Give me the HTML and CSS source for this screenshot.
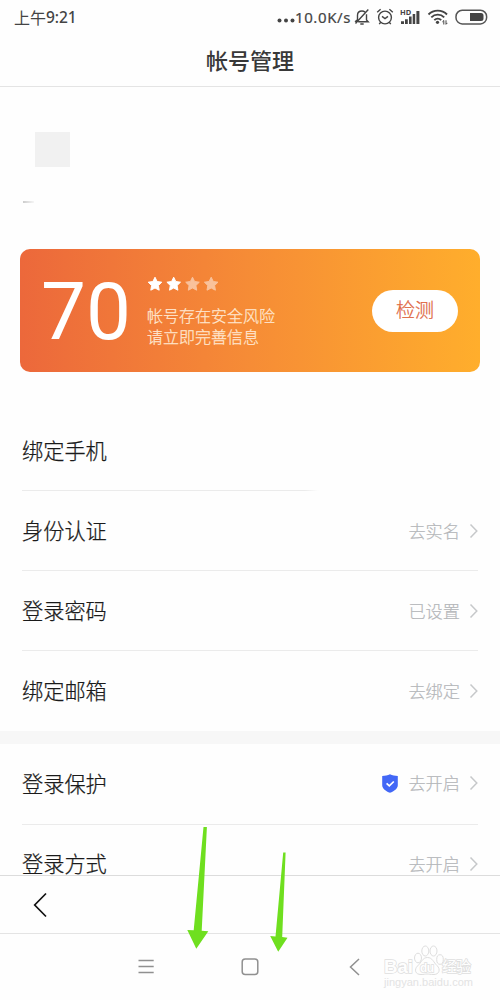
FILE: index.html
```
<!DOCTYPE html>
<html lang="zh-CN">
<head>
<meta charset="utf-8">
<title>帐号管理</title>
<link rel="stylesheet" href="styles.css">
</head>
<body>
<div class="screen">
  <header class="status">
    <div class="clock">上午<span class="time">9:21</span></div>
    <div class="indicators">
      <svg class="dots" width="18" height="20" viewBox="0 0 18 20"><circle cx="2.5" cy="13.5" r="2"/><circle cx="9" cy="13.5" r="2"/><circle cx="15.5" cy="13.5" r="2"/></svg>
      <span class="speed">10.0K/s</span>
      <svg class="line bell" width="16" height="18" viewBox="0 0 16 18"><path d="M3.5 12V7.300C3.500 4.800 5.300 3 8 3c1.200 0 2.200.4 3 1M12.500 6.300V12l1.700 1.800H4.200M1.500 15.500 14.300 1.500M1 13.800l2.500-2M6.300 16h3.400"/></svg>
      <svg class="line alarm" width="18" height="18" viewBox="0 0 18 18"><circle cx="9" cy="9.500" r="6.400"/><path d="M1.200 4.200 4.600 1.300M16.800 4.200 13.400 1.300M6 8.400l3 2.200 3-2.200M4.800 14.200l-1.600 1.900M13.200 14.200l1.600 1.900"/></svg>
      <svg class="signal" width="21" height="18" viewBox="0 0 21 18"><text x="0" y="7.300">HD</text><path d="M1 13.200h3V16H1zM5 11.200h2.800V16H5zM9 8.500h2.600V16H9zM12.700 6h2.500v10h-2.500zM16.400 3h3v13h-3z"/></svg>
      <svg class="wifi" width="21" height="18" viewBox="0 0 21 18"><path class="arc" d="M1.500 6.500C6.500 1.300 15 1.300 20 6.500M4.300 9.400c3.600-3.700 9.300-3.700 12.900 0M7.300 12.100c2-2 4.900-2 6.900 0"/><circle cx="10.500" cy="14.300" r="1.600"/><path class="tiny" d="M16.800 16.500v-4l-1.400 1.400M19 12.300v4l1.400-1.400"/></svg>
      <svg class="battery" width="33" height="18" viewBox="0 0 33 18"><rect class="shell" x="1" y="2.300" width="30.600" height="13.600" rx="6.200"/><path d="M15 5h11a2.500 2.500 0 0 1 2.500 2.500v3A2.500 2.500 0 0 1 26 13H15z"/></svg>
    </div>
  </header>
  <h1 class="title">帐号管理</h1>

  <main class="content">
    <section class="profile">
      <div class="avatar"></div>
      <div class="trace"></div>
    </section>

    <section class="card">
      <div class="score">70</div>
      <div class="summary">
        <svg class="stars" width="74" height="16" viewBox="0 0 74 16">
          <defs><path id="star" d="M8 1.200l2.100 4.300 4.700.7-3.400 3.300.8 4.700L8 12l-4.200 2.200.8-4.700L1.200 6.200l4.700-.7z"/></defs>
          <use href="#star"/><use href="#star" x="18.700"/><use href="#star" x="37.500" class="off"/><use href="#star" x="56.200" class="off"/>
        </svg>
        <p>帐号存在安全风险</p>
        <p>请立即完善信息</p>
      </div>
      <button class="check">检测</button>
    </section>

    <ul class="list">
      <li class="row faded"><span class="label">绑定手机</span></li>
      <li class="row"><span class="label">身份认证</span><span class="value">去实名</span><svg class="chevron" width="9" height="16" viewBox="0 0 9 16"><path d="M1.500 1.500 7.800 8l-6.300 6.500"/></svg></li>
      <li class="row"><span class="label">登录密码</span><span class="value">已设置</span><svg class="chevron" width="9" height="16" viewBox="0 0 9 16"><path d="M1.500 1.500 7.800 8l-6.300 6.500"/></svg></li>
      <li class="row last"><span class="label">绑定邮箱</span><span class="value">去绑定</span><svg class="chevron" width="9" height="16" viewBox="0 0 9 16"><path d="M1.500 1.500 7.800 8l-6.300 6.500"/></svg></li>
    </ul>
    <div class="band"></div>
    <ul class="list second">
      <li class="row"><span class="label">登录保护</span><svg class="shield" width="16" height="19" viewBox="0 0 16 19"><path class="body" d="M8 .3C10.300 1.500 13 2 15.800 2v9.200c0 3.200-3.700 6-7.800 7.600-4.100-1.600-7.800-4.400-7.800-7.600V2C3 2 5.700 1.500 8 .3z"/><path class="tick" d="M4.600 9.300l2.700 2.600 4.500-4.400"/></svg><span class="value">去开启</span><svg class="chevron" width="9" height="16" viewBox="0 0 9 16"><path d="M1.500 1.500 7.800 8l-6.300 6.500"/></svg></li>
      <li class="row last"><span class="label">登录方式</span><span class="value">去开启</span><svg class="chevron" width="9" height="16" viewBox="0 0 9 16"><path d="M1.500 1.500 7.800 8l-6.300 6.500"/></svg></li>
    </ul>
  </main>

  <div class="toolbar">
    <svg class="back" width="16" height="26" viewBox="0 0 16 26"><path d="M13 1.500 1.700 13 13 24.500"/></svg>
  </div>
  <nav class="nav">
    <svg width="18" height="18" viewBox="0 0 18 18"><path d="M2.500 2.500h15.200M2.500 8.500h15.200M2.500 14.500h15.200"/></svg>
    <svg width="18" height="18" viewBox="0 0 18 18"><rect x="1.200" y="1" width="15.600" height="15.600" rx="3"/></svg>
    <svg width="18" height="18" viewBox="0 0 18 18"><path d="M14 1 5.500 9l8.500 8"/></svg>
  </nav>

  <svg class="arrows" width="130" height="130" viewBox="185 825 130 130">
    <path d="M203.500 827h3.400l-5.200 103.800 6.600.4-12 17.600-9-18.800 6.400.3z"/>
    <path d="M283.200 852.500h2.400l-3.400 84.400 5.300.9-9.300 14-8-15.900 5.300.5z"/>
  </svg>
  <svg class="watermark" width="100" height="50" viewBox="380 940 100 50">
    <g class="paw"><ellipse cx="418" cy="958" rx="3.500" ry="4.800"/><ellipse cx="425.300" cy="951" rx="3.500" ry="5"/><ellipse cx="433.500" cy="951" rx="3.500" ry="5"/><ellipse cx="440" cy="959.500" rx="3.300" ry="4.800"/><path d="M427.500 957.500c5 0 6 5 9.500 8 4 4 2 9-3 9-4 0-5-.5-7-.5s-3 .5-6 .5c-6 0-7-5-3.500-8.500 4-3.500 5-8.500 10-8.500z"/></g>
    <text class="brand" x="384" y="973" textLength="29" lengthAdjust="spacingAndGlyphs">Bai</text>
    <text class="du" x="420" y="972" textLength="14">du</text>
    <text class="cn" x="442" y="972" textLength="29">经验</text>
    <text class="url" x="384" y="985.500" textLength="89">jingyan.baidu.com</text>
  </svg>
</div>
</body>
</html>
```
FILE: styles.css
```
* { box-sizing: border-box; }
body {
  margin: 0;
  background: #fefefe;
  font-family: "Noto Sans CJK SC", sans-serif;
  color: #222;
}
.screen {
  position: relative;
  width: 500px;
  height: 1000px;
  overflow: hidden;
  display: flex;
  flex-direction: column;
}
svg { flex: none; display: block; }

.status {
  height: 34px;
  flex: none;
  padding: 0 12px 0 14px;
  display: flex;
  justify-content: space-between;
  align-items: center;
  color: #444;
}
.clock { font-size: 16px; line-height: 34px; display: flex; }
.time { font-family: "Noto Sans", sans-serif; font-size: 15.500px; font-weight: 500; letter-spacing: -0.100px; }
.indicators { display: flex; align-items: center; fill: #444; }
.speed { font-family: "Noto Sans", sans-serif; font-size: 15px; line-height: 20px; letter-spacing: 0.600px; width: 58px; white-space: nowrap; padding-bottom: 1px; -webkit-text-stroke: 0.200px; }
.line { fill: none; stroke: #444; stroke-width: 1.400; }
.bell { margin-right: 6px; margin-left: 1px; }
.alarm { margin-right: 6px; }
.signal { margin-right: 6px; }
.signal text { font: 700 7.500px "Noto Sans", sans-serif; }
.wifi { margin-right: 7px; }
.arc { fill: none; stroke: #444; stroke-width: 1.900; }
.tiny { fill: none; stroke: #444; stroke-width: 1; }
.shell { fill: none; stroke: #555; stroke-width: 1.500; }

.title {
  margin: 0;
  height: 53px;
  flex: none;
  border-bottom: 1px solid #e4e4e4;
  text-align: center;
  font-size: 22px;
  line-height: 51px;
  font-weight: 500;
  color: #383838;
}
.content { height: 789px; flex: none; overflow: hidden; border-bottom: 1px solid #dcdcdc; }
.profile { height: 162px; padding: 45px 0 0 35px; }
.avatar { width: 35px; height: 35px; background: #f1f1f1; }
.trace { width: 11px; height: 2px; margin: 34px 0 0 -12px; background: linear-gradient(90deg, #ccc, #f6f6f6); }

.card {
  height: 123px;
  margin: 0 20px;
  padding: 0 22px 0 21px;
  border-radius: 10px;
  background: linear-gradient(90deg, #ec683b 0%, #f68c36 50%, #ffae2c 100%);
  display: flex;
  align-items: center;
}
.score { width: 106px; padding-top: 3px; font: 400 80px/120px Roboto, sans-serif; color: #fff; }
.summary { flex: 1; color: #ffe6cf; font-size: 16px; font-weight: 300; line-height: 21px; padding-top: 1px; -webkit-text-stroke: 0.250px; }
.summary p { margin: 0; }
.stars { margin-bottom: 13px; fill: #fff; stroke: #fff; stroke-width: 1; stroke-linejoin: round; }
.off { opacity: 0.5; }
.check {
  width: 86px;
  height: 42px;
  padding: 0 0 3px;
  border: 0;
  border-radius: 21px;
  background: #fff;
  color: #e0663f;
  font: 300 19px/36px "Noto Sans CJK SC", sans-serif;
  -webkit-text-stroke: 0.250px;
}

.list { list-style: none; margin: 0; padding: 39px 22px 0; }
.row {
  height: 80px;
  border-bottom: 1px solid #ebebeb;
  display: flex;
  align-items: center;
}
.faded { border-image: linear-gradient(90deg, #ebebeb 62%, transparent 65%) 1; }
.last { border-bottom-color: transparent; }
.label { flex: 1; font-size: 21.200px; font-weight: 300; color: #1a1a1a; padding-bottom: 2px; -webkit-text-stroke: 0.250px; }
.value { font-size: 17.200px; font-weight: 300; color: #b4b6b9; margin-right: 9px; padding-bottom: 1px; -webkit-text-stroke: 0.200px; }
.chevron { fill: none; stroke: #c6c8ca; stroke-width: 1.500; }
.band { height: 13px; background: #f7f7f7; }
.second { padding-top: 0; }
.second .row:first-child { height: 81px; padding-bottom: 2px; }
.second .last { padding-bottom: 2px; }
.shield { margin-right: 10px; }
.body { fill: #4267f6; }
.tick { fill: none; stroke: #fff; stroke-width: 1.700; }

.toolbar {
  height: 58px;
  flex: none;
  border-bottom: 1px solid #e4e4e4;
  padding-left: 33px;
  display: flex;
  align-items: center;
}
.back { fill: none; stroke: #111; stroke-width: 1.700; }
.nav {
  flex: 1;
  padding: 0 137px 0 136px;
  display: flex;
  justify-content: space-between;
  align-items: center;
  fill: none;
  stroke: #909090;
  stroke-width: 1.500;
}
.arrows { position: absolute; left: 185px; top: 825px; fill: #6fdf1f; }
.watermark { position: absolute; left: 380px; top: 940px; fill: #fefefe; stroke: #dedede; stroke-width: 1; }
.watermark text { font-family: "Liberation Sans", "Noto Sans CJK SC", sans-serif; paint-order: stroke; stroke-width: 1.500; }
.watermark .brand { font-size: 19px; font-weight: 700; }
.watermark .du { font-size: 12px; font-weight: 700; }
.watermark .cn { font-size: 15px; font-weight: 400; }
.watermark .url { font-size: 11px; fill: #e3e3e3; stroke: none; }
```
